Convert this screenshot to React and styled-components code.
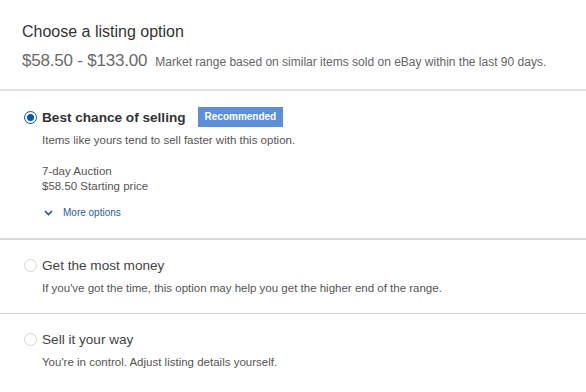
import React from "react";
import styled, { createGlobalStyle } from "styled-components";

const GlobalStyle = createGlobalStyle`
  html, body {
    margin: 0;
    padding: 0;
    background: #fff;
    font-family: "Liberation Sans", Arial, sans-serif;
  }
`;

const Page = styled.div`
  width: 586px;
  height: 392px;
  overflow: hidden;
  background: #fff;
`;

const Header = styled.div`
  padding: 22px 22px 0 22px;
  height: 67px;
  border-bottom: 2px solid #e2e2e2;
`;

const Title = styled.div`
  font-size: 16px;
  color: #333;
  line-height: 20px;
`;

const PriceRow = styled.div`
  display: flex;
  align-items: baseline;
  margin-top: 9px;
`;

const Price = styled.span`
  font-size: 17px;
  letter-spacing: -0.2px;
  color: #6a6a6a;
`;

const PriceNote = styled.span`
  font-size: 12px;
  color: #666;
  margin-left: 8px;
`;

const Option = styled.div`
  padding: ${p => p.pad};
  border-bottom: ${p => p.last ? "none" : "1px solid #d9d9d9"};
  border-bottom-width: ${p => p.thick ? "2px" : "1px"};
`;

const OptionHead = styled.div`
  display: flex;
  align-items: center;
  height: 20px;
`;

const Radio = styled.span`
  box-sizing: border-box;
  width: 13px;
  height: 13px;
  border-radius: 50%;
  margin: 0 5px 0 24px;
  border: ${p => p.checked ? "1.5px solid #0654ba" : "1px solid #d4d4d4"};
  display: flex;
  align-items: center;
  justify-content: center;
  &::after {
    content: "";
    display: ${p => p.checked ? "block" : "none"};
    width: 7px;
    height: 7px;
    border-radius: 50%;
    background: #0654ba;
  }
`;

const OptionTitle = styled.span`
  font-size: 13.6px;
  color: ${p => p.bold ? "#333" : "#444"};
  font-weight: ${p => p.bold ? "bold" : "normal"};
`;

const Badge = styled.span`
  background: #5d8fd8;
  color: #fff;
  font-size: 10px;
  font-weight: bold;
  padding: 0 7px;
  height: 20px;
  line-height: 20px;
  margin-left: 12px;
`;

const Body = styled.div`
  padding-left: 42px;
  font-size: 11.5px;
  color: #555;
`;

const Line = styled.div`
  margin-top: ${p => p.gap || 0}px;
  line-height: 15px;
`;

const More = styled.div`
  display: flex;
  align-items: center;
  margin-top: 13px;
  margin-left: 2px;
  color: #2a5ea8;
  font-size: 10px;
  gap: 10px;
`;

const Chevron = () => (
  <svg width="9" height="6" viewBox="0 0 9 6">
    <path d="M1 1 L4.5 4.5 L8 1" fill="none" stroke="#1f4f99" strokeWidth="1.6" />
  </svg>
);

export default function App() {
  return (
    <Page>
      <GlobalStyle />
      <Header>
        <Title>Choose a listing option</Title>
        <PriceRow>
          <Price>$58.50 - $133.00</Price>
          <PriceNote>Market range based on similar items sold on eBay within the last 90 days.</PriceNote>
        </PriceRow>
      </Header>

      <Option pad="16px 0 20px 0" thick>
        <OptionHead>
          <Radio checked />
          <OptionTitle bold>Best chance of selling</OptionTitle>
          <Badge>Recommended</Badge>
        </OptionHead>
        <Body>
          <Line gap={6}>Items like yours tend to sell faster with this option.</Line>
          <Line gap={16}>7-day Auction</Line>
          <Line>$58.50 Starting price</Line>
          <More>
            <Chevron />
            <span>More options</span>
          </More>
        </Body>
      </Option>

      <Option pad="15px 0 17px 0">
        <OptionHead>
          <Radio />
          <OptionTitle>Get the most money</OptionTitle>
        </OptionHead>
        <Body>
          <Line gap={6}>If you've got the time, this option may help you get the higher end of the range.</Line>
        </Body>
      </Option>

      <Option pad="15px 0 16px 0" last>
        <OptionHead>
          <Radio />
          <OptionTitle>Sell it your way</OptionTitle>
        </OptionHead>
        <Body>
          <Line gap={6}>You're in control. Adjust listing details yourself.</Line>
        </Body>
      </Option>
    </Page>
  );
}
